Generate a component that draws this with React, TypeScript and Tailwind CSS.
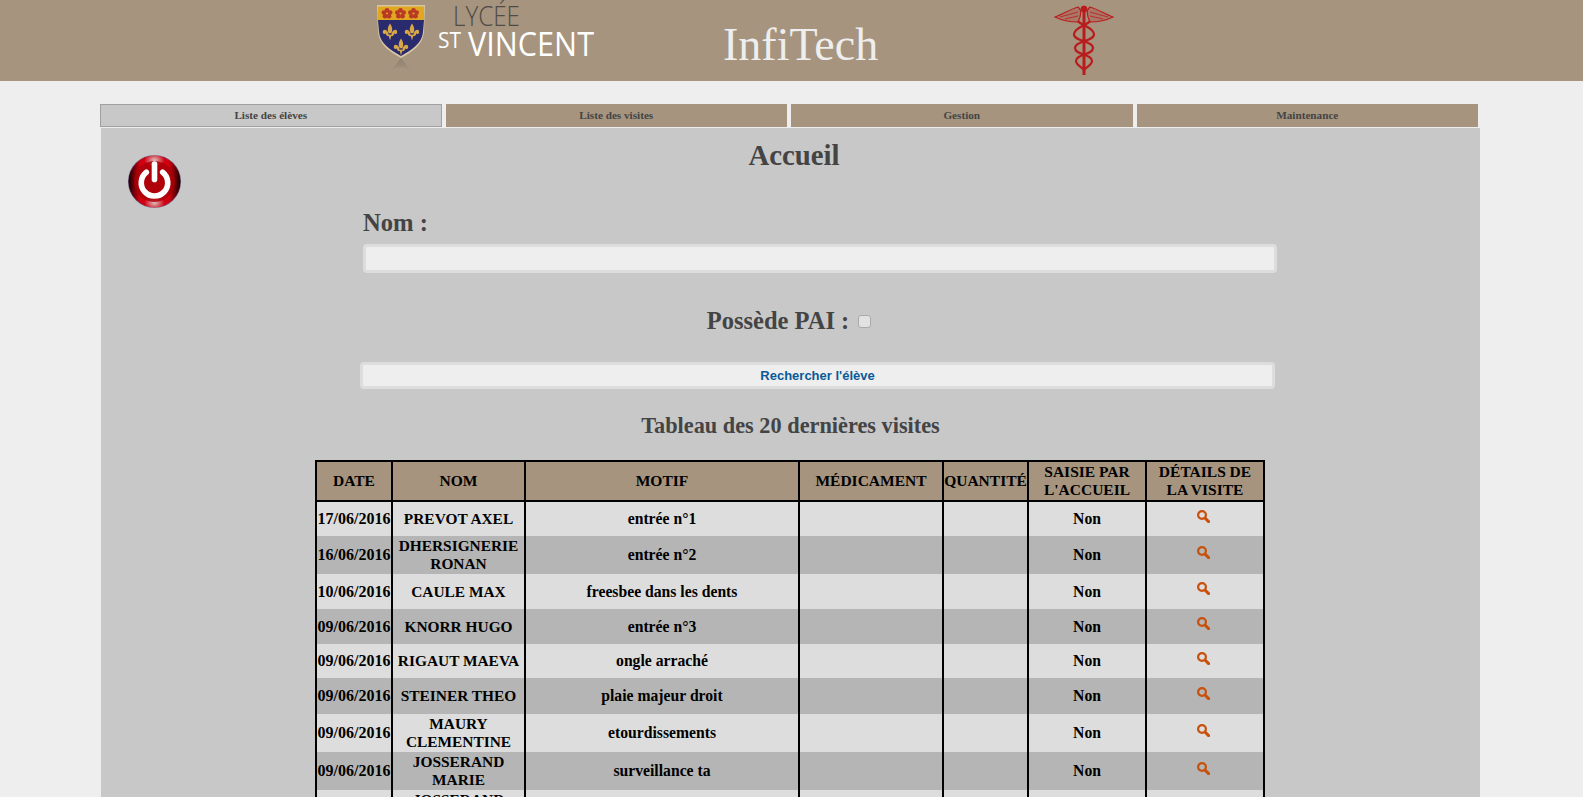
import React from "react"

const visites = [
  { date: "17/06/2016", nom: "PREVOT AXEL", motif: "entrée n°1", h: "h-[34px]" },
  { date: "16/06/2016", nom: "DHERSIGNERIE RONAN", motif: "entrée n°2", h: "h-[38px]" },
  { date: "10/06/2016", nom: "CAULE MAX", motif: "freesbee dans les dents", h: "h-[35px]" },
  { date: "09/06/2016", nom: "KNORR HUGO", motif: "entrée n°3", h: "h-[35px]" },
  { date: "09/06/2016", nom: "RIGAUT MAEVA", motif: "ongle arraché", h: "h-[34px]" },
  { date: "09/06/2016", nom: "STEINER THEO", motif: "plaie majeur droit", h: "h-[36px]" },
  { date: "09/06/2016", nom: "MAURY CLEMENTINE", motif: "etourdissements", h: "h-[38px]" },
  { date: "09/06/2016", nom: "JOSSERAND MARIE", motif: "surveillance ta", h: "h-[38px]" },
  { date: "09/06/2016", nom: "JOSSERAND MARIE", motif: "surveillance ta", h: "h-[38px]" },
]

const onglets = ["Liste des élèves", "Liste des visites", "Gestion", "Maintenance"]

function Fleur({ x, y }: { x: number; y: number }) {
  return (
    <g transform={`translate(${x} ${y}) scale(1.2)`} fill="#d8a848">
      <path d="M0 -7 C2 -4 2.4 -2 1.2 1 L-1.2 1 C-2.4 -2 -2 -4 0 -7Z" />
      <path d="M-1.5 1 C-2 -2 -6 -3 -6 0 C-6 1.8 -4 2.2 -3.4 1 C-3.8 3 -2 3.2 -1.2 2Z" />
      <path d="M1.5 1 C2 -2 6 -3 6 0 C6 1.8 4 2.2 3.4 1 C3.8 3 2 3.2 1.2 2Z" />
      <rect x="-2.6" y="2.2" width="5.2" height="1.2" />
      <path d="M-1 3.4 L1 3.4 L0 7Z" />
    </g>
  )
}

function Rose({ x, y }: { x: number; y: number }) {
  return (
    <g transform={`translate(${x} ${y}) scale(1.25)`} fill="#b83a26">
      <circle cx="0" cy="-2.6" r="1.9" />
      <circle cx="2.5" cy="-0.8" r="1.9" />
      <circle cx="1.6" cy="2.1" r="1.9" />
      <circle cx="-1.6" cy="2.1" r="1.9" />
      <circle cx="-2.5" cy="-0.8" r="1.9" />
    </g>
  )
}

function Logo() {
  const sans = { fontFamily: "'Open Sans', sans-serif" }
  return (
    <svg width="228" height="80" viewBox="0 0 228 80" className="shrink-0">
      <defs>
        <linearGradient id="reflet" x1="0" y1="0" x2="0" y2="1">
          <stop offset="0" stopColor="#8d8070" />
          <stop offset="1" stopColor="#a69480" />
        </linearGradient>
      </defs>
      <path d="M20 72 L31 58 L42 72 C36 66 26 66 20 72Z" fill="url(#reflet)" />
      <path d="M7 5 L55 5 L54 32 C53 45 42 52 31 58 C20 52 9 45 8 32Z" fill="#d9c7a4" />
      <path d="M8 20 L54 20 L53 32 C52 44 41 50 31 56 C21 50 10 44 9 32Z" fill="#2a2a6e" />
      <path d="M8 6.5 L54 6.5 L54 20 L8 20Z" fill="#e0a820" />
      <Rose x={17} y={13.5} />
      <Rose x={30.5} y={13.5} />
      <Rose x={43.5} y={13.5} />
      <Fleur x={20} y={32} />
      <Fleur x={42} y={32} />
      <Fleur x={31} y={47} />
      <text x="83" y="26" textLength="67" lengthAdjust="spacingAndGlyphs" fontSize="28" fontWeight="300" fill="#504b44" style={sans}>LYCÉE</text>
      <text x="68" y="48" textLength="23" lengthAdjust="spacingAndGlyphs" fontSize="21" fill="#ffffff" style={sans}>ST</text>
      <text x="98" y="56" textLength="126" lengthAdjust="spacingAndGlyphs" fontSize="33" fill="#ffffff" style={sans}>VINCENT</text>
    </svg>
  )
}

function Caducee() {
  return (
    <svg width="60" height="72" viewBox="0 0 60 72" className="shrink-0" fill="none" stroke="#b91c1c">
      {/* ailes */}
      <path d="M1 13 C9 10 17 5 24 3 C28 6 27 12 24 18 C15 18 7 16 1 13Z" strokeWidth="1.2" fill="#b91c1c" fillOpacity="0.25" />
      <path d="M59 13 C51 10 43 5 36 3 C32 6 33 12 36 18 C45 18 53 16 59 13Z" strokeWidth="1.2" fill="#b91c1c" fillOpacity="0.25" />
      <path d="M6 13 L24 8 M11 15 L24 12 M54 13 L36 8 M49 15 L36 12" strokeWidth="0.8" />
      {/* baton */}
      <path d="M30 2 L30 71" strokeWidth="3" />
      <circle cx="30" cy="5" r="3" fill="#b91c1c" />
      {/* serpents */}
      <path d="M24 17 C28 22 39 23 40 30 C41 37 21 37 21 44 C21 51 38 50 38 57 C38 61 32 63 30 66" strokeWidth="2.2" />
      <path d="M36 17 C32 22 21 23 20 30 C19 37 39 37 39 44 C39 51 22 50 22 57 C22 61 28 63 30 66" strokeWidth="2.2" />
    </svg>
  )
}

function BoutonPower() {
  return (
    <svg width="53" height="53" viewBox="0 0 52 52" className="absolute left-[27px] top-[27px]">
      <defs>
        <linearGradient id="disque" x1="0" y1="0" x2="1" y2="0">
          <stop offset="0" stopColor="#180000" />
          <stop offset="0.22" stopColor="#d00010" />
          <stop offset="0.78" stopColor="#d00010" />
          <stop offset="1" stopColor="#180000" />
        </linearGradient>
        <radialGradient id="eclat" cx="0.5" cy="0.5" r="0.5">
          <stop offset="0" stopColor="#e0c8c8" stopOpacity="0.95" />
          <stop offset="1" stopColor="#e0c8c8" stopOpacity="0" />
        </radialGradient>
      </defs>
      <circle cx="26" cy="26" r="26" fill="#6a5a80" />
      <circle cx="26" cy="26" r="25.4" fill="url(#disque)" />
      <ellipse cx="26" cy="5" rx="10" ry="7" fill="url(#eclat)" />
      <ellipse cx="26" cy="47" rx="10" ry="7" fill="url(#eclat)" />
      <circle cx="26" cy="26" r="20" fill="#a80008" opacity="0.8" />
      <path d="M18 17 A13 13 0 1 0 34 17" fill="none" stroke="#ffffff" strokeWidth="5.5" strokeLinecap="round" />
      <path d="M26 9 L26 24" fill="none" stroke="#ffffff" strokeWidth="5.5" strokeLinecap="round" />
    </svg>
  )
}

function Loupe() {
  return (
    <svg width="13" height="13" viewBox="0 0 13 13" className="inline-block align-top" fill="none" stroke="#c8500a">
      <circle cx="5" cy="5" r="3.9" strokeWidth="2.2" />
      <path d="M8 8 L11.6 11.6" strokeWidth="3" strokeLinecap="round" />
    </svg>
  )
}

export default function App() {
  return (
    <div className="h-screen overflow-hidden bg-[#eeeeee] font-['Liberation_Serif',serif] text-[#444444]">
      {/* bandeau */}
      <header className="flex h-[81px] items-start bg-[#a6947f] pl-[370px]">
        <Logo />
        <div className="ml-[125px] w-[331px] pt-[17px] text-[46px] leading-[56px] text-[#eeeeee]">InfiTech</div>
        <div className="pt-[4px]"><Caducee /></div>
      </header>

      {/* onglets */}
      <nav className="ml-[100px] mt-[23px] grid w-[1378px] grid-cols-4 gap-[4px]">
        {onglets.map((o, i) => (
          <div
            key={o}
            className={
              i === 0
                ? "flex h-[23px] items-center justify-center border border-[#a0a0a0] bg-[#c8c8c8] pb-[1px] text-[11.2px] font-bold"
                : "flex h-[23px] items-center justify-center bg-[#a6947f] pb-[1px] text-[11.2px] font-bold"
            }
          >
            {o}
          </div>
        ))}
      </nav>

      {/* contenu */}
      <main className="relative ml-[101px] mt-[1px] w-[1379px] bg-[#c8c8c8] pt-[10px]">
        <BoutonPower />
        <h1 className="pl-[7px] text-center text-[28.8px] font-bold leading-[34px]">Accueil</h1>

        <div className="ml-[259px] w-[917px]">
          <label className="mt-[37px] block pl-[3px] text-[24.6px] font-bold leading-[28px]">Nom :</label>
          <div className="ml-[3px] mt-[7px] h-[29px] w-[914px] rounded-[4px] border-[3px] border-[#dddddd] bg-[#eeeeee]" />
        </div>

        <div className="mt-[34px] flex items-center justify-center gap-[9px] pr-[3px] text-[24.5px] font-bold leading-[28px]">
          <span>Possède PAI :</span>
          <span className="h-[13px] w-[13px] rounded-[3px] border border-[#aaaaaa] bg-[#e2e2e2]" />
        </div>

        <div className="ml-[259px] mt-[27px] flex h-[27px] w-[915px] items-center justify-center rounded-[4px] border-[3px] border-[#dddddd] bg-[#eeeeee] font-['Liberation_Sans',sans-serif] text-[13px] font-bold text-[#0a5a96]">
          Rechercher l'élève
        </div>

        <h2 className="mt-[24px] text-center text-[22.3px] font-bold leading-[26px]">Tableau des 20 dernières visites</h2>

        {/* tableau */}
        <table className="ml-[214px] mt-[21px] w-[950px] table-fixed border-separate border-spacing-0 border-2 border-black text-center text-[15.7px] font-bold leading-[18px] text-black">
          <colgroup>
            <col className="w-[76px]" />
            <col className="w-[133px]" />
            <col className="w-[274px]" />
            <col className="w-[144px]" />
            <col className="w-[85px]" />
            <col className="w-[118px]" />
            <col className="w-[116px]" />
          </colgroup>
          <thead className="text-[15.5px]">
            <tr className="h-[40px] bg-[#a6947f]">
              <th className="border-r-2 border-b-2 border-black p-0">DATE</th>
              <th className="border-r-2 border-b-2 border-black p-0">NOM</th>
              <th className="border-r-2 border-b-2 border-black p-0">MOTIF</th>
              <th className="border-r-2 border-b-2 border-black p-0">MÉDICAMENT</th>
              <th className="border-r-2 border-b-2 border-black p-0">QUANTITÉ</th>
              <th className="border-r-2 border-b-2 border-black p-0">SAISIE PAR L'ACCUEIL</th>
              <th className="border-b-2 border-black p-0">DÉTAILS DE LA VISITE</th>
            </tr>
          </thead>
          <tbody>
            {visites.map((v, i) => (
              <tr key={i} className={`${v.h} ${i % 2 === 0 ? "bg-[#dddddd]" : "bg-[#b5b5b5]"}`}>
                <td className="border-r-2 border-black p-0 text-[16px]">{v.date}</td>
                <td className="border-r-2 border-black px-[2px] py-0 text-[15.4px]">{v.nom}</td>
                <td className="border-r-2 border-black p-0">{v.motif}</td>
                <td className="border-r-2 border-black p-0"></td>
                <td className="border-r-2 border-black p-0"></td>
                <td className="border-r-2 border-black p-0">Non</td>
                <td className="p-0 align-middle">
                  <span className="relative right-[2px] top-[-3px] flex justify-center"><Loupe /></span>
                </td>
              </tr>
            ))}
          </tbody>
        </table>
      </main>
    </div>
  )
}
